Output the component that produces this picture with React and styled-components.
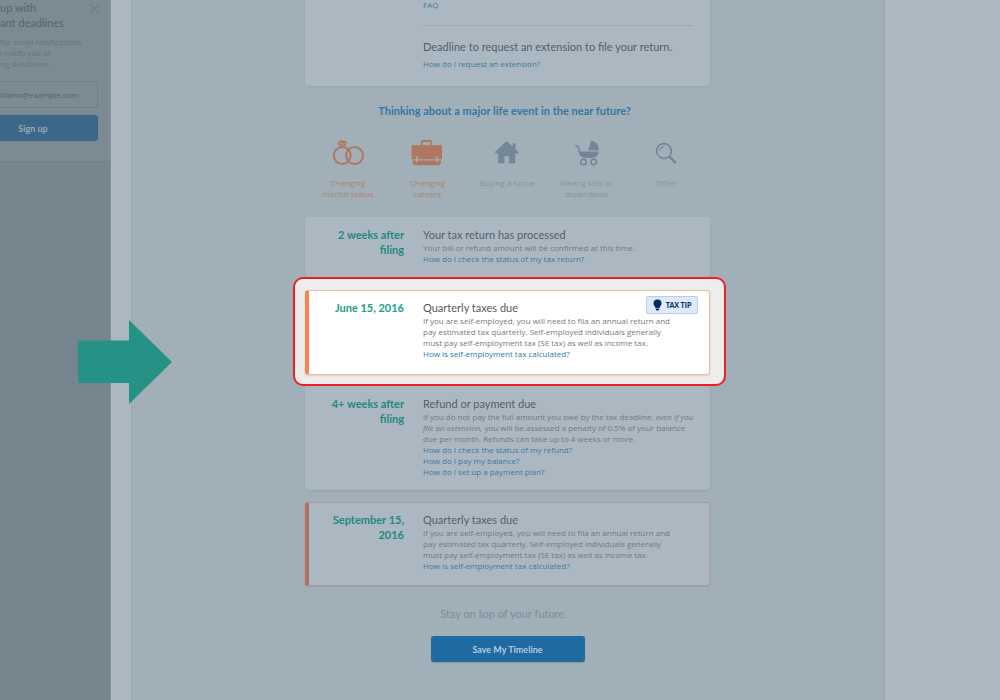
import React from "react";
import styled, { createGlobalStyle } from "styled-components";

const small = `"Open Sans", "Noto Sans", sans-serif`;

const Global = createGlobalStyle`
  * { box-sizing: border-box; }
  body { margin: 0; background: #abb8c2; font-family: Lato, "Liberation Sans", sans-serif; }
  h2, h3, p, ul { margin: 0; padding: 0; font-weight: 400; }
  ul { list-style: none; }
  a { text-decoration: none; color: inherit; }
`;

const Page = styled.div`
  position: relative;
  display: grid;
  grid-template-columns: 111px minmax(440px, 754fr) minmax(0, 95fr);
  column-gap: 20px;
  height: 100vh;
  overflow: hidden;
  background: #abb8c2;
`;

const Sidebar = styled.aside`
  background: #76848e;
  border-right: 1px solid #82919b;
`;

const SignupPanel = styled.form`
  position: relative;
  padding: 0 12px 20px 0;
  background: #7c8a94;
  border-bottom: 1px solid #72808a;
`;

const SignupTitle = styled.h2`
  font-size: 11px;
  line-height: 15px;
  color: #55636d;
  white-space: nowrap;
`;

const SignupText = styled.p`
  margin: 6px 0 12px;
  font-family: ${small};
  font-size: 8px;
  line-height: 11px;
  color: #667480;
  white-space: nowrap;
`;

const CloseButton = styled.button`
  position: absolute;
  top: 3px;
  right: 10px;
  width: 11px;
  height: 11px;
  padding: 0;
  border: 0;
  background: none;
  color: #66747e;
  svg { display: block; }
`;

const EmailInput = styled.input`
  display: block;
  width: 100%;
  height: 27px;
  padding: 0;
  border: 1px solid #6f7e89;
  border-left: 0;
  border-radius: 0 3px 3px 0;
  background: #7c8a94;
  font: 8px ${small};
  color: #55636d;
`;

const Button = styled.button`
  display: block;
  height: 26px;
  border: 0;
  font: 700 9px Lato, "Liberation Sans", sans-serif;
`;

const SignupButton = styled(Button)`
  width: 100%;
  margin-top: 7px;
  padding: 0 32px 0 0;
  border-radius: 0 3px 3px 0;
  background: #3d6788;
  color: #98a9b6;
`;

const SaveButton = styled(Button)`
  width: 154px;
  margin: 15px auto 0;
  padding: 0;
  border-radius: 3px;
  background: #1f6aa1;
  box-shadow: 0 1px 1px #8496a3;
  color: #b5cbd9;
`;

const Main = styled.main`
  border: solid #9aa9b3;
  border-width: 0 2px 0 1px;
  background: #a1afb8;
`;

const Column = styled.div`
  width: 405px;
  margin: -11px auto 0;
`;

const Card = styled.section`
  position: relative;
  display: grid;
  grid-template-columns: 81px minmax(0, 1fr);
  column-gap: 19px;
  min-height: ${(p) => p.$minHeight || 0}px;
  padding: 9px 12px 12px 14px;
  border: 1px solid ${(p) => p.$edge || "transparent"};
  border-left: 4px solid ${(p) => p.$accent || "transparent"};
  border-radius: 3px;
  background: ${(p) => (p.$bright ? "#ffffff" : "#abb8c2")};
  box-shadow: 0 1px 2px ${(p) => (p.$bright ? "#d8cfcb" : "#93a2ac")};
`;

const Spaced = styled.div`
  margin-top: 12px;
`;

const Highlight = styled.div`
  position: relative;
  z-index: 1;
  margin: 0 -16px 0 -12px;
  padding: 11px 14px 9px 10px;
  border: 2px solid #ee2025;
  border-radius: 10px;
  background: #ededee;
`;

const DateLabel = styled.div`
  font-size: 11px;
  line-height: 15px;
  font-weight: 700;
  text-align: right;
  color: ${(p) => (p.$bright ? "#20a184" : "#23887f")};
`;

const Title = styled.h3`
  font-size: 11px;
  line-height: 15px;
  white-space: nowrap;
  color: ${(p) => (p.$bright ? "#55595d" : "#52616b")};
`;

const Text = styled.p`
  font-family: ${small};
  font-size: 8px;
  line-height: 11px;
  white-space: nowrap;
  color: ${(p) => (p.$bright ? "#77797c" : "#6b7a85")};
`;

const Link = styled.a`
  display: block;
  font-family: ${small};
  font-size: 8px;
  line-height: 11px;
  white-space: nowrap;
  color: ${(p) => (p.$bright ? "#2a78aa" : "#3d789c")};
`;

const Rule = styled.hr`
  margin: 15px 4px 13px 0;
  border: 0;
  border-top: 1px solid #9aa9b4;
`;

const Extension = styled.div`
  display: grid;
  row-gap: 4px;
`;

const Badge = styled.span`
  position: absolute;
  top: 5px;
  right: 11px;
  display: flex;
  align-items: center;
  justify-content: center;
  gap: 4px;
  width: 52px;
  height: 18px;
  border: 1px solid #b5cfec;
  border-radius: 2px;
  background: #dceafb;
  font-size: 7px;
  font-weight: 900;
  color: #0b2a5c;
`;

const EventsTitle = styled.h2`
  margin-top: 17px;
  font-size: 11px;
  font-weight: 700;
  line-height: 15px;
  text-align: center;
  padding-right: 6px;
  color: #3a769e;
`;

const Events = styled.ul`
  display: grid;
  grid-template-columns: repeat(5, 1fr);
  width: 398px;
  height: 77px;
  margin: 22px auto 0 3px;
`;

const Event = styled.li`
  display: flex;
  flex-direction: column;
  align-items: center;
  gap: 11px;
  color: ${(p) => (p.$active ? "#b17660" : "#738598")};
`;

const EventLabel = styled.span`
  font-family: ${small};
  font-size: 8px;
  line-height: 11px;
  text-align: center;
  white-space: pre-line;
  color: ${(p) => (p.$active ? "#ad8273" : "#8493a1")};
`;

const Closing = styled.p`
  margin-top: 20px;
  padding-right: 8px;
  font-size: 11px;
  line-height: 15px;
  text-align: center;
  color: #7d8c9a;
`;

const Arrow = styled.svg`
  position: absolute;
  z-index: 2;
  left: 78px;
  top: 320px;
`;

const icons = {
  rings: (
    <g>
      <g fill="none" stroke="currentColor" strokeWidth="2">
        <circle cx="10.2" cy="15.5" r="8.4" />
        <circle cx="22.6" cy="15.5" r="8.4" />
      </g>
      <path d="M5.6 2.4 8 .6h4.6L15 2.4v1.4L10.3 8 5.6 3.8z" fill="currentColor" />
      <path d="M6.4 3.4h7.8M8.6 3.4l1.7 3 1.7-3" fill="none" stroke="#a1afb8" strokeWidth=".5" />
    </g>
  ),
  briefcase: (
    <g>
      <path d="M10.7 6V2.4Q10.7 1 12 1h7q1.3 0 1.3 1.4V6" fill="none" stroke="currentColor" strokeWidth="1.8" />
      <path d="M1.5 5.2H30q1 0 1 1v13h-4.4v-3h-1.6v3H6.600v-3H5v3H.6v-13q0-1 .9-1z" fill="currentColor" />
      <path d="M1.600 20.600H5v1.800h1.600v-1.800H25v1.800h1.600v-1.800H30V23.400q-1 1.800-2.400 1.800H4q-1.400 0-2.400-1.800z" fill="currentColor" />
    </g>
  ),
  home: (
    <path
      d="M15.600 1.200l6 5.200V3.200h3v6.200l3 2.700-1 1.300h-2.400V23.200h-6.200v-7h-4.600v7H7.200V13.400H4.800l-1-1.300z"
      fill="currentColor"
    />
  ),
  pram: (
    <g>
      <path d="M20.400.6Q27.600 2.200 27.800 10.300H17zM7.400 11.400h20.400q-.6 6.600-7.400 6.600h-5.200q-6.400 0-7.800-6.600z" fill="currentColor" />
      <path d="M4.800 5.600q3.200.2 3.600 6" fill="none" stroke="currentColor" strokeWidth="1.500" strokeLinecap="round" />
      <circle cx="12.400" cy="22" r="2.800" fill="none" stroke="currentColor" strokeWidth="1.500" />
      <circle cx="22.800" cy="22" r="2.800" fill="none" stroke="currentColor" strokeWidth="1.500" />
    </g>
  ),
  search: (
    <g fill="none" stroke="currentColor">
      <circle cx="14" cy="11" r="7.400" strokeWidth="1.600" />
      <path d="M19.300 16.300l6.600 6.800" strokeWidth="2.400" />
      <path d="M9.800 10.800q.4-3.800 4.400-4" strokeWidth="1.200" />
    </g>
  ),
};

const events = [
  { icon: "rings", label: "Changing\nmarital status", active: true },
  { icon: "briefcase", label: "Changing\ncareers", active: true },
  { icon: "home", label: "Buying a home" },
  { icon: "pram", label: "Having kids or\ndependents" },
  { icon: "search", label: "Other" },
];

function QuarterlyTaxes({ bright }) {
  return (
    <div>
      <Title $bright={bright}>Quarterly taxes due</Title>
      <Text $bright={bright}>
        If you are self-employed, you will need to fila an annual return and
        <br />
        pay estimated tax quarterly. Self-employed individuals generally
        <br />
        must pay self-employment tax (SE tax) as well as income tax.
      </Text>
      <Link href="#calc" $bright={bright}>How is self-employment tax calculated?</Link>
    </div>
  );
}

export default function App() {
  return (
    <Page>
      <Global />
      <Sidebar>
        <SignupPanel onSubmit={(e) => e.preventDefault()}>
          <SignupTitle>
            up with
            <br />
            ant deadlines
          </SignupTitle>
          <CloseButton type="button" aria-label="Close">
            <svg width="11" height="11" viewBox="0 0 11 11">
              <path d="M1 1l9 9M10 1l-9 9" stroke="currentColor" strokeWidth="1" />
            </svg>
          </CloseButton>
          <SignupText>
            for email notifications
            <br />l notify you of
            <br />
            ng deadlines.
          </SignupText>
          <EmailInput type="email" aria-label="Email" defaultValue="lliams@example.com" />
          <SignupButton type="submit">Sign up</SignupButton>
        </SignupPanel>
      </Sidebar>

      <Main>
        <Column>
          <Card $minHeight={97}>
            <DateLabel />
            <div>
              <Link href="#faq">FAQ</Link>
              <Rule />
              <Extension>
                <Title>Deadline to request an extension to file your return.</Title>
                <Link href="#extension">How do I request an extension?</Link>
              </Extension>
            </div>
          </Card>

          <EventsTitle>Thinking about a major life event in the near future?</EventsTitle>
          <Events>
            {events.map((e) => (
              <Event key={e.icon} $active={e.active}>
                <svg width="32" height="26" viewBox="0 0 32 26">{icons[e.icon]}</svg>
                <EventLabel $active={e.active}>{e.label}</EventLabel>
              </Event>
            ))}
          </Events>

          <Card $minHeight={60}>
            <DateLabel>2 weeks after filing</DateLabel>
            <div>
              <Title>Your tax return has processed</Title>
              <Text>Your bill or refund amount will be confirmed at this time.</Text>
              <Link href="#status">How do I check the status of my tax return?</Link>
            </div>
          </Card>

          <Highlight>
            <Card $bright $minHeight={85} $accent="#fb8351" $edge="#f4b79f">
              <DateLabel $bright>June 15, 2016</DateLabel>
              <QuarterlyTaxes bright />
              <Badge>
                <svg width="9" height="12" viewBox="0 0 9 12" fill="currentColor">
                  <path d="M4.500.5a4 4 0 0 1 4 4c0 2-1.500 2.800-2 4.500h-4C2 7.300.5 6.500.5 4.500a4 4 0 0 1 4-4zM2.700 9.500h3.600V10.500L5.500 11.500h-2l-.8-1z" />
                </svg>
                TAX TIP
              </Badge>
            </Card>
          </Highlight>

          <Card $minHeight={104}>
            <DateLabel>4+ weeks after filing</DateLabel>
            <div>
              <Title>Refund or payment due</Title>
              <Text>
                If you do not pay the full amount you owe by the tax deadline, <em>even if you</em>
                <br />
                <em>file an extension,</em> you will be assessed a penalty of 0.5% of your balance
                <br />
                due per month. Refunds can take up to 4 weeks or more.
              </Text>
              <Link href="#refund">How do I check the status of my refund?</Link>
              <Link href="#balance">How do I pay my balance?</Link>
              <Link href="#plan">How do I set up a payment plan?</Link>
            </div>
          </Card>

          <Spaced>
            <Card $minHeight={84} $accent="#b1705c" $edge="#ac9a99">
              <DateLabel>September 15, 2016</DateLabel>
              <QuarterlyTaxes />
            </Card>
          </Spaced>

          <Closing>Stay on top of your future.</Closing>
          <SaveButton type="button">Save My Timeline</SaveButton>
        </Column>
      </Main>

      <Arrow width="94" height="84" viewBox="0 0 94 84" aria-hidden="true">
        <path d="M0 20.500H51V0L94 42 51 84V63H0z" fill="#259285" />
      </Arrow>
    </Page>
  );
}
